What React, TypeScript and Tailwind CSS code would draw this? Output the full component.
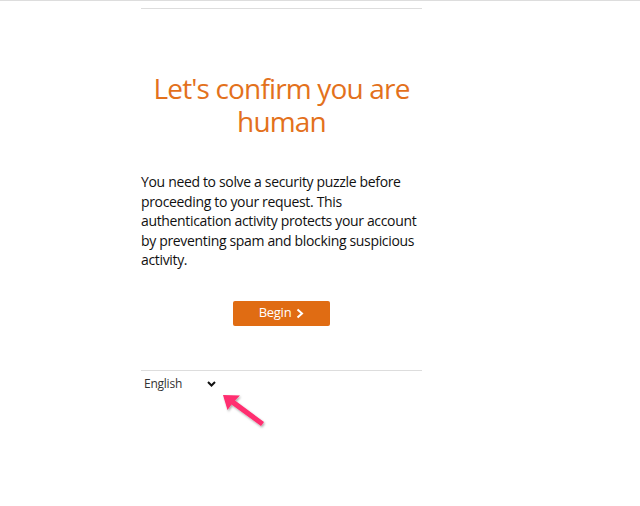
export default function App() {
  return (
    <div className="relative min-h-screen bg-white border-t border-[#dddddd] font-['Open_Sans',sans-serif] text-[#111111]">
      <div className="ml-[141px] w-[281px]">
        <div className="mt-[7px] border-t border-[#dddddd]" />
        <h1 className="mt-[63px] text-center text-[28px] leading-[33px] font-normal tracking-[-0.03em] text-[#e3711c]">
          Let's confirm you are human
        </h1>
        <p className="mt-[34px] text-[14px] leading-[19.5px] tracking-[-0.024em] text-[#111111]">
          You need to solve a security puzzle before proceeding to your request. This authentication activity protects
          your account by preventing spam and blocking suspicious activity.
        </p>
        <div className="mt-[31px] flex justify-center">
          <button className="flex h-[25px] w-[97px] items-center justify-center gap-[5px] rounded-[2px] bg-[#e06c13] text-[13px] tracking-[-0.02em] text-white">
            Begin
            <svg width="8" height="11" viewBox="0 0 8 11" fill="none">
              <path d="M1.5 1.5 L6 5.5 L1.5 9.5" stroke="white" strokeWidth="2" />
            </svg>
          </button>
        </div>
        <div className="mt-[44px] border-t border-[#dddddd]" />
        <div className="mt-[4px] flex items-center pl-[3px] text-[12px] leading-[18px] tracking-[-0.02em] text-[#333333]">
          <span className="w-[63px]">English</span>
          <svg width="9" height="6" viewBox="0 0 9 6" fill="none">
            <path d="M1 1 L4.5 4.5 L8 1" stroke="#111" strokeWidth="2" />
          </svg>
        </div>
      </div>
      <svg className="absolute left-[218px] top-[388px]" width="52" height="46" viewBox="0 0 52 46">
        <defs>
          <filter id="sh" x="-20%" y="-20%" width="140%" height="140%">
            <feDropShadow dx="1" dy="1.5" stdDeviation="1.2" floodColor="#000" floodOpacity="0.35" />
          </filter>
        </defs>
        <path
          d="M5 6 L22 6.5 L17 11.5 L46 33 L43 37 L13.5 15.5 L9.5 21 Z"
          fill="#ff2d6f"
          filter="url(#sh)"
        />
      </svg>
    </div>
  );
}
